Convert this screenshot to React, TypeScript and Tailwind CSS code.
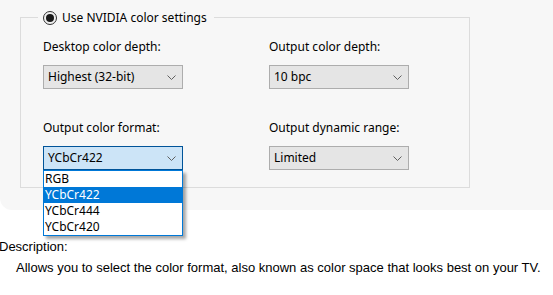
import React from "react";

const Chevron = () => (
  <svg width="9" height="5" viewBox="0 0 9 5" className="shrink-0">
    <path d="M0.5 0.5 L4.5 4.5 L8.5 0.5" fill="none" stroke="#606060" strokeWidth="1" />
  </svg>
);

const Select = ({ value, focused = false }: { value: string; focused?: boolean }) => (
  <div
    className={
      "w-[140px] h-[24px] border flex items-center justify-between pl-[4px] pr-[6px] " +
      (focused ? "bg-[#cce4f7] border-[#005499]" : "bg-[#e5e5e5] border-[#adadad]")
    }
  >
    <span className="leading-[16px]">{value}</span>
    <Chevron />
  </div>
);

export default function App() {
  const items = ["RGB", "YCbCr422", "YCbCr444", "YCbCr420"];
  return (
    <div
      className="w-[553px] h-[295px] bg-white text-black text-[12px] overflow-hidden relative"
      style={{ fontFamily: '"Noto Sans", "Liberation Sans", sans-serif' }}
    >
      <div className="h-[210px] bg-[#f7f7f7] rounded-bl-[12px] pt-[17px] pl-[20px]">
        <div className="relative w-[450px] h-[171px] border border-[#dcdcdc]">
          <div className="absolute left-[17px] top-[-9px] h-[18px] flex items-center gap-[5px] bg-[#f7f7f7] pl-[5px] pr-[7px]">
            <div className="w-[14px] h-[14px] rounded-full border border-[#333] bg-[#f0f0f0] flex items-center justify-center">
              <div className="w-[8px] h-[8px] rounded-full bg-[#1a1a1a]" />
            </div>
            <span className="leading-[16px]">Use NVIDIA color settings</span>
          </div>
          <div className="grid grid-cols-[226px_140px] pl-[22px] pt-[21px] gap-y-[9px]">
            <div className="flex flex-col gap-[10px]">
              <span className="leading-[16px]">Desktop color depth:</span>
              <Select value="Highest (32-bit)" />
            </div>
            <div className="flex flex-col gap-[10px]">
              <span className="leading-[16px]">Output color depth:</span>
              <Select value="10 bpc" />
            </div>
            <div className="flex flex-col gap-[10px] pt-[22px] relative">
              <span className="leading-[16px]">Output color format:</span>
              <Select value="YCbCr422" focused />
              <div className="absolute left-0 top-[72px] w-[140px] bg-white border border-[#0078d7] shadow-[3px_3px_3px_rgba(0,0,0,0.35)] z-10">
                {items.map((it) => (
                  <div
                    key={it}
                    className={
                      "h-[16px] leading-[16px] pl-[1px] " +
                      (it === "YCbCr422" ? "bg-[#0078d7] text-white" : "")
                    }
                  >
                    {it}
                  </div>
                ))}
              </div>
            </div>
            <div className="flex flex-col gap-[10px] pt-[22px]">
              <span className="leading-[16px]">Output dynamic range:</span>
              <Select value="Limited" />
            </div>
          </div>
        </div>
      </div>
      <div
        className="pt-[29px] text-[13px]"
        style={{ fontFamily: '"Liberation Sans", "DejaVu Sans", sans-serif' }}
      >
        <div className="leading-[16px] ml-[-1px]">Description:</div>
        <div className="leading-[16px] pl-[16px] pt-[5px]">
          Allows you to select the color format, also known as color space that looks best on your TV.
        </div>
      </div>
    </div>
  );
}
